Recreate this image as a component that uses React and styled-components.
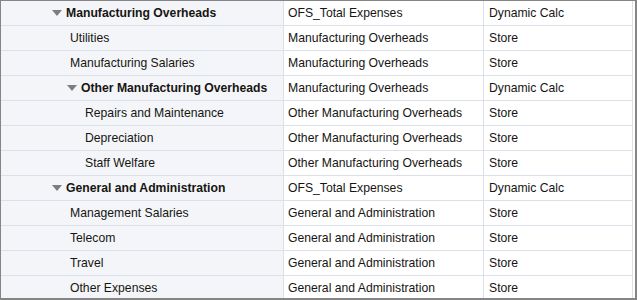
import React from 'react';
import styled, { createGlobalStyle } from 'styled-components';

const GlobalStyle = createGlobalStyle`
  html, body {
    margin: 0;
    padding: 0;
    background: #ffffff;
  }
  body {
    font-family: 'Liberation Sans', Arial, sans-serif;
    font-size: 12.2px;
    color: #161513;
  }
`;

const Frame = styled.div`
  box-sizing: border-box;
  width: 637px;
  height: 300px;
  overflow: hidden;
  border: 1px solid #858585;
  border-right-width: 2px;
  border-bottom-width: 2px;
  background: #ffffff;
`;

const Row = styled.div`
  display: grid;
  grid-template-columns: 283px 200px 149px;
  height: 25px;
`;

const Cell = styled.div`
  box-sizing: border-box;
  display: flex;
  align-items: center;
  height: 25px;
  padding-left: ${({ $pad }) => $pad}px;
  padding-bottom: 1px;
  border-right: 1px solid #dbe1e8;
  border-bottom: 1px solid #dbe1e8;
  background: ${({ $shaded }) => ($shaded ? '#f4f5f8' : '#ffffff')};
  white-space: nowrap;
`;

const Label = styled.span`
  font-weight: ${({ $bold }) => ($bold ? 700 : 400)};
`;

const Toggle = styled.span`
  width: 0;
  height: 0;
  margin-right: 4px;
  border-left: 5.5px solid transparent;
  border-right: 5.5px solid transparent;
  border-top: 6px solid #7d7d7d;
`;

const rows = [
  { name: 'Manufacturing Overheads', level: 0, open: true, parent: 'OFS_Total Expenses', storage: 'Dynamic Calc' },
  { name: 'Utilities', level: 1, parent: 'Manufacturing Overheads', storage: 'Store' },
  { name: 'Manufacturing Salaries', level: 1, parent: 'Manufacturing Overheads', storage: 'Store' },
  { name: 'Other Manufacturing Overheads', level: 1, open: true, parent: 'Manufacturing Overheads', storage: 'Dynamic Calc' },
  { name: 'Repairs and Maintenance', level: 2, parent: 'Other Manufacturing Overheads', storage: 'Store' },
  { name: 'Depreciation', level: 2, parent: 'Other Manufacturing Overheads', storage: 'Store' },
  { name: 'Staff Welfare', level: 2, parent: 'Other Manufacturing Overheads', storage: 'Store' },
  { name: 'General and Administration', level: 0, open: true, parent: 'OFS_Total Expenses', storage: 'Dynamic Calc' },
  { name: 'Management Salaries', level: 1, parent: 'General and Administration', storage: 'Store' },
  { name: 'Telecom', level: 1, parent: 'General and Administration', storage: 'Store' },
  { name: 'Travel', level: 1, parent: 'General and Administration', storage: 'Store' },
  { name: 'Other Expenses', level: 1, parent: 'General and Administration', storage: 'Store' },
];

const App = () => (
  <>
    <GlobalStyle />
    <Frame>
      {rows.map((r) => {
        const base = 51 + 15 * r.level;
        return (
          <Row key={r.name}>
            <Cell $shaded $pad={r.open ? base : base - 15 + 18}>
              {r.open && <Toggle />}
              <Label $bold={r.open}>{r.name}</Label>
            </Cell>
            <Cell $pad={4}>{r.parent}</Cell>
            <Cell $pad={5}>{r.storage}</Cell>
          </Row>
        );
      })}
    </Frame>
  </>
);

export default App;
